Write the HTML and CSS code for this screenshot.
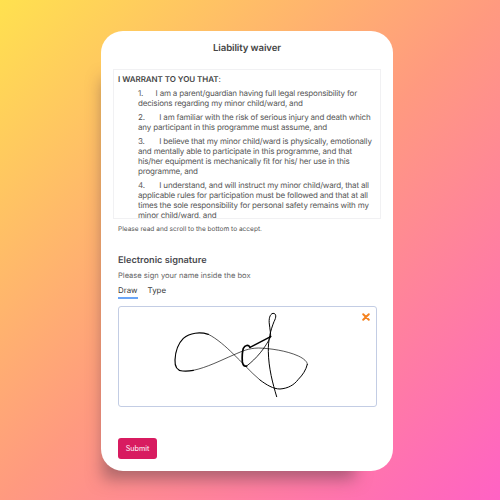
FILE: index.html
```
<!DOCTYPE html>
<html lang="en">
<head>
    <meta charset="UTF-8">
    <meta name="viewport" content="width=device-width, initial-scale=1.0">
    <title>Liability waiver</title>
    <link rel="stylesheet" href="styles.css">
</head>
<body>
    <div class="waiver-card">
        <h1>Liability waiver</h1>

        <div class="waiver-scroll">
            <p class="waiver-lead"><strong>I WARRANT TO YOU THAT</strong>:</p>
            <p class="waiver-item">1.&nbsp;&nbsp;&nbsp;&nbsp;&nbsp;&nbsp;I am a parent/guardian having full legal responsibility for decisions regarding my minor child/ward, and</p>
            <p class="waiver-item">2.&nbsp;&nbsp;&nbsp;&nbsp;&nbsp;&nbsp;&nbsp;I am familiar with the risk of serious injury and death which any participant in this programme must assume, and</p>
            <p class="waiver-item">3.&nbsp;&nbsp;&nbsp;&nbsp;&nbsp;&nbsp;&nbsp;I believe that my minor child/ward is physically, emotionally and mentally able to participate in this programme, and that his/her equipment is mechanically fit for his/ her use in this programme, and</p>
            <p class="waiver-item">4.&nbsp;&nbsp;&nbsp;&nbsp;&nbsp;&nbsp;&nbsp;I understand, and will instruct my minor child/ward, that all applicable rules for participation must be followed and that at all times the sole responsibility for personal safety remains with my minor child/ward, and</p>
        </div>
        <p class="waiver-hint">Please read and scroll to the bottom to accept.</p>

        <div class="signature">
            <h2>Electronic signature</h2>
            <p class="signature-help">Please sign your name inside the box</p>

            <div class="tabs">
                <span class="tab tab-active">Draw</span>
                <span class="tab">Type</span>
            </div>

            <div class="signature-box">
                <svg class="signature-ink" viewBox="57 201 771 297" fill="none" stroke="#000" stroke-linecap="round" stroke-linejoin="round">
                    <path stroke-width="3" d="M530 470C518 430 506 385 505 335C504 300 512 270 522 245C529 232 530 220 519 220C509 222 506 238 508 252C510 268 512 280 512 290"/>
                    <path stroke-width="2.5" d="M512 290C495 325 470 355 440 378"/>
                    <path stroke-width="5" d="M440 378C432 380 428 375 427 365C426 350 427 335 430 325C435 315 445 313 450 322"/>
                    <path stroke-width="4.5" d="M450 322L512 290"/>
                    <path stroke-width="2" d="M280 391C320 383 365 360 400 345C430 332 445 325 475 324C510 325 560 332 595 348C612 356 622 365 622 373"/>
                    <path stroke-width="3" d="M622 373C618 390 608 405 595 418C582 435 565 445 540 447C520 447 500 435 480 420"/>
                    <path stroke-width="2" d="M480 420C450 395 425 365 400 342C380 322 350 295 325 283"/>
                    <path stroke-width="3.5" d="M325 283C300 275 270 278 250 295C235 310 226 335 225 360C224 380 232 392 248 393C260 394 270 393 280 391"/>
                </svg>
                <svg class="signature-clear" viewBox="0 0 10 10" stroke="#f5821f" stroke-width="2.4" stroke-linecap="round">
                    <path d="M1.5 1.5L8.5 8.5M8.5 1.5L1.5 8.5"/>
                </svg>
            </div>
        </div>

        <button class="submit-btn">Submit</button>
    </div>
</body>
</html>
```

FILE: styles.css
```
* {
    box-sizing: border-box;
}

body {
    font-family: 'Inter', 'Liberation Sans', sans-serif;
    text-rendering: geometricPrecision;
    background: linear-gradient(135deg, #ffe14f 0%, #ff9a7f 50%, #ff62c4 100%);
    margin: 0;
    width: 500px;
    height: 500px;
    overflow: hidden;
    display: flex;
    justify-content: center;
    align-items: center;
    color: #4a4a4f;
}

.waiver-card {
    background-color: white;
    width: 292px;
    height: 440px;
    margin: 2px 6px 0 0;
    padding: 11px 12px 12px;
    border-radius: 22px;
    box-shadow: -18px 28px 16px -20px rgba(90, 60, 70, 0.5);
    display: flex;
    flex-direction: column;
}

h1 {
    margin: 0 0 14px;
    font-size: 9.6px;
    letter-spacing: -0.1px;
    line-height: 13px;
    font-weight: 600;
    text-align: center;
    color: #444;
}

.waiver-scroll {
    flex: none;
    height: 150px;
    overflow: hidden;
    border: 1px solid #f1f1f3;
    padding: 4px 6px 0 4px;
    font-size: 8px;
    letter-spacing: -0.18px;
    line-height: 10px;
    color: #555;
}

.waiver-scroll p {
    margin: 0 0 4px;
}

.waiver-lead strong {
    font-weight: 600;
    letter-spacing: -0.05px;
    color: #444;
}

.waiver-item {
    padding-left: 20px;
}

.waiver-hint {
    margin: 6px 0 0 5px;
    font-size: 6.55px;
    line-height: 9px;
    color: #555;
}

.signature {
    margin-top: 21px;
    padding: 0 4px 0 5px;
}

h2 {
    margin: 0;
    font-size: 9.2px;
    line-height: 12px;
    font-weight: 600;
    color: #4a4a4f;
}

.signature-help {
    margin: 3px 0 0;
    font-size: 7.55px;
    line-height: 12px;
    color: #666;
}

.tabs {
    display: flex;
    gap: 10px;
    margin-top: 2px;
}

.tab {
    font-size: 7.9px;
    line-height: 12px;
    padding-bottom: 1px;
    color: #3c3c40;
    border-bottom: 2px solid transparent;
}

.tab-active {
    border-bottom-color: #6aa5f7;
}

.signature-box {
    position: relative;
    height: 101px;
    margin-top: 7px;
    border: 1px solid #c3cde4;
    border-radius: 3px;
}

.signature-ink {
    display: block;
    width: 100%;
    height: 100%;
}

.signature-clear {
    position: absolute;
    top: 6px;
    right: 6px;
    width: 8px;
    height: 8px;
}

.submit-btn {
    align-self: flex-start;
    margin: 31px 0 0 5px;
    width: 39px;
    height: 22px;
    padding: 0;
    border: none;
    border-radius: 3px;
    background-color: #d81b60;
    color: white;
    font-family: inherit;
    font-size: 7.2px;
}
```
